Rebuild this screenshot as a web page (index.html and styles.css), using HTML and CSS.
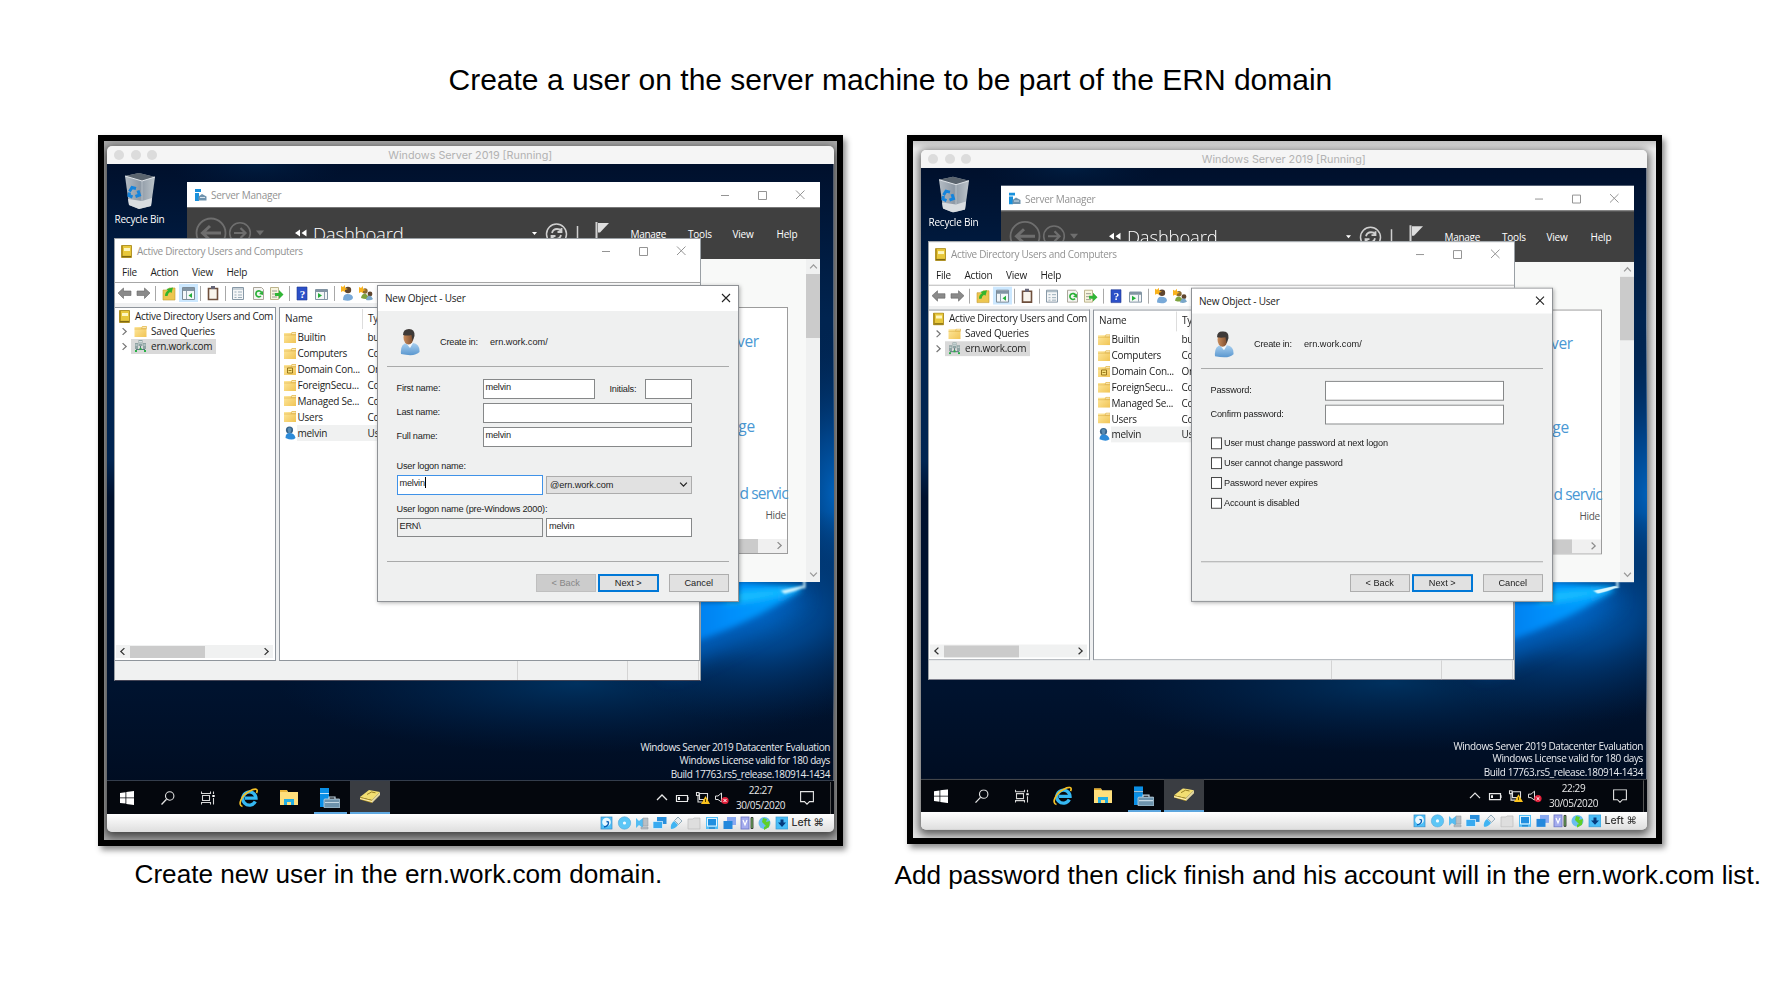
FILE: index.html
```html
<!DOCTYPE html>
<html lang="en">
<head>
<meta charset="utf-8">
<title>Create a user on the server machine</title>
<link rel="stylesheet" href="styles.css">
</head>
<body>
<svg class="defs" width="0" height="0" aria-hidden="true">
  <defs>
    <linearGradient id="gBin" x1="0" x2="1"><stop offset="0" stop-color="#b4bcc4"/><stop offset=".5" stop-color="#8e99a5"/><stop offset="1" stop-color="#bcc4ca"/></linearGradient>
    <linearGradient id="gShirt" x1="0" y1="0" x2="0" y2="1"><stop offset="0" stop-color="#a9d0f0"/><stop offset="1" stop-color="#5a97cf"/></linearGradient>
    <linearGradient id="gFace" x1="0" x2="1"><stop offset="0" stop-color="#c98c5c"/><stop offset="1" stop-color="#7a4a2c"/></linearGradient>
    <linearGradient id="gFolder" x1="0" y1="0" x2="1" y2="1"><stop offset="0" stop-color="#ffe9a0"/><stop offset="1" stop-color="#f0c455"/></linearGradient>
    <linearGradient id="gWall" x1="0" y1="0" x2="0" y2="1"><stop offset="0" stop-color="#00102c"/><stop offset=".25" stop-color="#002450"/><stop offset=".48" stop-color="#002552"/><stop offset=".54" stop-color="#00112e"/><stop offset=".85" stop-color="#00132f"/><stop offset="1" stop-color="#000d22"/></linearGradient>
    <radialGradient id="gGlow"><stop offset="0" stop-color="#0062bc"/><stop offset=".35" stop-color="#00468e" stop-opacity=".9"/><stop offset="1" stop-color="#00234e" stop-opacity="0"/></radialGradient>
    <radialGradient id="gFlow"><stop offset="0" stop-color="#00315f"/><stop offset="1" stop-color="#002048" stop-opacity="0"/></radialGradient>
    <linearGradient id="gBeam" x1="1" x2="0"><stop offset="0" stop-color="#0aa8ff"/><stop offset=".5" stop-color="#0090fc"/><stop offset="1" stop-color="#0074e4"/></linearGradient>
    <filter id="soft" x="-30%" y="-30%" width="160%" height="160%"><feGaussianBlur stdDeviation="3"/></filter>
    <filter id="softer" x="-30%" y="-50%" width="160%" height="200%"><feGaussianBlur stdDeviation="10"/></filter>
    <filter id="soft1"><feGaussianBlur stdDeviation=".8"/></filter>
  </defs>
  <symbol id="i-bin" viewBox="0 0 32 37"><path d="M1 4 15 1l16 4-4 29-12 3-10-4z" fill="url(#gBin)"/><path d="M1 4 15 1l16 4-13 4z" fill="#5a646e"/><path d="M1 4l17 5 13-4" fill="none" stroke="#e0e5ea" stroke-width="1"/><path d="M4 27l14 2 10-3-1 8-12 3-10-4z" fill="#d9dde0"/><path d="M18 9v20" stroke="#cfd5da" stroke-width=".6"/><path d="M5.500 19.500 8 15.500l4 1M14 18.500l1.500 4.500-4 1.500M8.500 25 5 23.500l.5-3" fill="none" stroke="#1584dc" stroke-width="3"/></symbol>
  <symbol id="i-server" viewBox="0 0 12 12"><path d="M0 0h6v3H0z M0 4h4v8H0z" fill="#1790dc"/><path d="M3.500 7.500 7 5l4.500 2.500v4h-8z" fill="#6f93ad"/><path d="M5 8.500h5" stroke="#d7e4ee" stroke-width="1"/></symbol>
  <symbol id="i-book" viewBox="0 0 11 13"><path d="M.5.5h10v12H.5z" fill="#e8c83c" stroke="#b3952a"/><path d="M3 3h6v3H3z" fill="#fdf6c0"/><path d="M1 11.500h9" stroke="#7e6812" stroke-width="1.200"/><path d="M1.500 1v10" stroke="#b8961c"/></symbol>
  <symbol id="i-folder" viewBox="0 0 12 11"><path d="M0 1h7l1-1h4v11H0z" fill="url(#gFolder)"/><path d="M0 3h12M8 .5h4v2H7z" fill="#fbe9b4" stroke="#d9ab3f" stroke-width=".5"/></symbol>
  <symbol id="i-ou" viewBox="0 0 12 11"><use href="#i-folder" width="12" height="11"/><path d="M3.500 4h5v5h-5z M4.500 6.500h3" fill="#f9e27c" stroke="#8e6d10" stroke-width=".9"/></symbol>
  <symbol id="i-domain" viewBox="0 0 13 12"><path d="M4.500 0h4v6h-4zM1 3h3v6H1zM9 3h3v6H9z" fill="#8fa3a3"/><path d="M5 1.500h3M5 3h3M1.500 5h2M9.500 5h2" stroke="#e8f0f0" stroke-width=".8"/><path d="M6.500 6v3M2 9.500h9" stroke="#57767a"/><path d="M5.500 8h2v2h-2zM1 10h2v2H1zM10 10h2v2h-2z" fill="#28b045"/></symbol>
  <symbol id="i-usersm" viewBox="0 0 11 14"><circle cx="5" cy="4" r="3.600" fill="#36648c"/><path d="M3 3q2-3 4 0l-1 4H4z" fill="#5b8db3"/><path d="M1 12q0-5 4-5 5 0 6 5-3 3-10 0z" fill="#2c8ad8"/></symbol>
  <symbol id="i-user" viewBox="0 0 20 27"><path d="M1 25q-1-10 6-11h6q7 1 6.500 9Q15 28 1 25z" fill="url(#gShirt)"/><path d="M6 14l4 5 3-5z" fill="#f4f8fb"/><ellipse cx="8.500" cy="8.500" rx="5" ry="7" fill="url(#gFace)"/><path d="M3 6Q3 0 9 0q6 0 5.500 7l-2 5-1-6Q7 7 3 6z" fill="#3e3a38"/></symbol>
  <symbol id="i-toolbar" viewBox="0 0 262 20">
    <g fill="#8a8a8a" stroke="#666" stroke-width=".6"><path d="M0 10l5.500-5v3H13v4.500H5.500v3zM32 10l-5.500-5v3H19v4.500h7.500v3z"/></g>
    <path d="M37.500 3v15M82.500 3v15M107.500 3v15M171.500 3v15M216.500 3v15" stroke="#a8a8a8"/>
    <path d="M45 7h5l1-2h6v12H45z" fill="#edc650" stroke="#c49a2c" stroke-width=".6"/><path d="M47 13q0-4 3-5.500L48.500 6 55 4.500 53.500 10 52 9q-2 1-2.500 4z" fill="#35b52c"/>
    <path d="M61 1h19v18H61z" fill="#cce8ff"/><path d="M64.500 4.500h12v12h-12z" fill="#f4f7f9" stroke="#7c8b97"/><path d="M65 5h11v3H65z" fill="#8294a3"/><path d="M68.500 8v8" stroke="#8fa0ae"/><path d="M74 10v5l-3.500-2.500z" fill="#22ae39"/>
    <path d="M90.500 5.500h9v11h-9z" fill="#f8f4ec" stroke="#6e4f3c" stroke-width="1.600"/><path d="M93 3h4v3h-4z" fill="#667"/>
    <path d="M114.500 4.500h11v12h-11z" fill="#f5f6f7" stroke="#8798a6"/><path d="M115 6h10M116.500 9h2M116.500 12h2M116.500 14.500h2M120 9h4M120 12h4M120 14.500h4" stroke="#9badb9"/>
    <path d="M135.500 4.500h8l2 2v10h-10z" fill="#f5f5f2" stroke="#aaa59a"/><path d="M143 13a3 3 0 1 1 .6-3.500" fill="none" stroke="#2bb038" stroke-width="1.700"/><path d="M145 8v4l-4-1z" fill="#2bb038"/>
    <path d="M152.500 4.500h8v12h-8z" fill="#f8f5df" stroke="#bcb48c"/><path d="M154 8h5M154 11h5M154 14h5" stroke="#9a9a90"/><path d="M157 10h4V7l4.500 4.500L161 16v-3h-4z" fill="#31b536"/>
    <path d="M179 4h10v13h-10z" fill="#2c50c8" stroke="#1c3590" stroke-width=".6"/>
    <path d="M197.500 6.500h12v10h-12z" fill="#f4f6f7" stroke="#8294a3"/><path d="M198 6h11v3H198z" fill="#8294a3"/><path d="M206.500 9v7" stroke="#8fa0ae"/><path d="M200 10v5l4-2.500z" fill="#22ae39"/>
    <circle cx="230" cy="7" r="3.200" fill="#5f452e"/><path d="M225 17q0-6 4-6 6 0 6 4-2 4-10 2z" fill="#78a9d8"/><path d="M223 3l2 1 2-2 0 3 3 1-3 1 0 2-2-1-2 1z" fill="#f9b31d"/>
    <circle cx="247" cy="8" r="2.700" fill="#8a6a33"/><path d="M243 15q1-5 5-4l4 4q-4 2-9 0z" fill="#7ea33e"/><circle cx="252" cy="11" r="2.400" fill="#5f452e"/><path d="M248 17q1-5 5-4l2 3q-2 2-7 1z" fill="#79a6c8"/><path d="M241 4l2 1 2-2v3l3 1-3 1v2l-2-1-2 1z" fill="#f9b31d"/>
  </symbol>
  <symbol id="i-nav" viewBox="0 0 125 51"><g fill="none" stroke="#6e6e6e"><circle cx="24" cy="25" r="14.500" stroke-width="1.800"/><circle cx="53" cy="25" r="10.300" stroke-width="1.600"/><path d="M34 25H16M23 18l-7.500 7 7.500 7" stroke-width="3"/><path d="M47 25h11M53.500 20l5 5-5 5" stroke-width="2.200"/></g><path d="M69 22.500h8l-4 5z" fill="#6e6e6e"/><path d="M113 21.500v7l-5-3.500zM119.500 21.500v7l-5-3.500z" fill="#fff"/></symbol>
  <symbol id="i-tools" viewBox="0 0 84 51"><path d="M2 24h5l-2.500 3z" fill="#fff"/><g fill="none" stroke="#cfcfcf" stroke-width="1.500"><circle cx="26.500" cy="26" r="10"/><path d="M22 25q1-4 5-4 3 0 4 2M31.500 20v4h-4M31 27q-1 4-5 4-3 0-4-2M21.500 32v-4h4" stroke-width="1.800"/><path d="M47.500 18v17"/><path d="M66.500 14v30" stroke-width="2"/></g><path d="M68 15h11l-9 9.500h-2z" fill="#dedede"/></symbol>
  <symbol id="i-wctl" viewBox="0 0 85 12"><path d="M0 6.500h8M37.500 2.500h8v8h-8zM75 1.500l8.500 8.500M83.500 1.500 75 10" fill="none" stroke="#949494" stroke-width="1"/></symbol>
  <symbol id="i-x" viewBox="0 0 10 10"><path d="M1 1l8 8M9 1 1 9" stroke="#222" stroke-width="1.100"/></symbol>
  <symbol id="i-chev" viewBox="0 0 8 8"><path d="M1 2.300 4 5.500l3-3.200" fill="none" stroke="currentColor" stroke-width="1.100"/></symbol>
  <symbol id="i-win" viewBox="0 0 14 14"><path d="M0 2l5.500-.8v5.300H0zM6.300 1 14 0v6.500H6.300zM0 7.300h5.500v5.300L0 12zM6.300 7.300H14V14l-7.700-1z" fill="#fff"/></symbol>
  <symbol id="i-search" viewBox="0 0 14 14"><circle cx="8.700" cy="5" r="4.200" fill="none" stroke="#e4e4e4" stroke-width="1.100"/><path d="M5.500 8.300.5 13.500" stroke="#e4e4e4" stroke-width="1.300"/></symbol>
  <symbol id="i-task" viewBox="0 0 14 14"><path d="M.5.500v2h9v-2M.5 13.500v-2h9v2M1.500 4.500h7v5h-7zM12.500.5v2.500M12.500 7v6.500" fill="none" stroke="#d6d6d6" stroke-width="1.100"/><path d="M11.300 4h2.400v2h-2.400z" fill="#fff"/></symbol>
  <symbol id="i-ie" viewBox="0 0 20 20"><path d="M16.300 13.500a6.600 6.600 0 1 1 .7-3.300H6" fill="none" stroke="#35b8f2" stroke-width="3.300"/><path d="M3.500 18.500C-2 17 3 7 10 3.500 17-.5 19.500 1 17.500 5" fill="none" stroke="#f3bf26" stroke-width="1.700"/></symbol>
  <symbol id="i-exp" viewBox="0 0 18 16"><path d="M0 0h7l1 2h10v13H0z" fill="#ffdf7c"/><path d="M0 1h7" stroke="#e5aa28" stroke-width="1.500"/><path d="M4 15V9h10v6h-3v-3H7v3z" fill="#22aee4"/></symbol>
  <symbol id="i-sm" viewBox="0 0 20 20"><path d="M0 0h9v5H0zM0 6h9v13H0z" fill="#0a8fe6"/><path d="M0 5.500h9" stroke="#bfe4fb"/><rect x="4" y="11" width="16" height="9" rx="1" fill="#6d93ad" stroke="#c4d8e4" stroke-width=".8"/><path d="M9 11V9h6v2M5 14.500h14" fill="none" stroke="#c4d8e4" stroke-width="1.200"/></symbol>
  <symbol id="i-gold" viewBox="0 0 20 13"><path d="M0 7 9 0l11 2-8 8z" fill="#f2de72"/><path d="M0 7l12 3v3L0 9.500z" fill="#b99a2a"/><path d="M12 10l8-8v3l-8 8z" fill="#e3d7a0"/><path d="M7 4.500 11.500 2l4 .8" fill="none" stroke="#8d741c" stroke-width=".9"/><path d="M0 8.500l12 3" stroke="#fff3b8" stroke-width="1.200"/></symbol>
  <symbol id="i-tray" viewBox="0 0 76 16"><path d="M1 10l5-5 5 5" fill="none" stroke="#e8e8e8" stroke-width="1.300"/><path d="M20.500 5.500h11v6h-11zM32 7v3" fill="none" stroke="#e8e8e8" stroke-width="1.200"/><path d="M22 7h2v3h-2z" fill="#eee"/><path d="M43.500 3.500h8v6h-8zM40.500 2.500h2.500v3h-2.500zM42 6v6h4" fill="none" stroke="#ddd" stroke-width="1.100"/><path d="M49.500 6l4.500 8h-9z" fill="#fbc31c"/><path d="M49.500 9v3" stroke="#5a4200" stroke-width="1"/><path d="M59.500 6H62l3.500-3v9L62 9.500h-2.500z" fill="none" stroke="#ddd" stroke-width="1"/><circle cx="69" cy="10.500" r="3.600" fill="#e2203a"/><path d="M67.500 9l3 3M70.500 9l-3 3" stroke="#fff" stroke-width="1"/></symbol>
  <symbol id="i-note" viewBox="0 0 14 14"><path d="M.6.6h12.800v10H9.500L7 13.200 4.500 10.600H.6z" fill="none" stroke="#e4e4e4" stroke-width="1.100"/></symbol>
  <symbol id="i-status" viewBox="0 0 188 14">
    <rect x="1" y="1" width="11" height="12" fill="#4fc0f8" stroke="#3a8ec8" stroke-width=".7"/><circle cx="6.500" cy="6" r="4.300" fill="#eaf8ff"/><path d="M4 11q5-1 4.500-5L6.500 5.500" fill="none" stroke="#0a5fb4" stroke-width="1.300"/>
    <circle cx="24.500" cy="7" r="6.200" fill="#5cc6f6" stroke="#54a8d8" stroke-width=".6"/><circle cx="24.500" cy="7" r="1.600" fill="#f4fbff"/>
    <path d="M36 2l3 3 4-3v10l-4-3-3 3z" fill="#55bdf2"/><path d="M43 2h5v8h-5zM41 11h7v2h-7z" fill="#b9bfc4" stroke="#8e979e" stroke-width=".5"/>
    <rect x="57" y="1" width="9.500" height="7" fill="#2a8fdc"/><rect x="53" y="5.500" width="9.500" height="7" fill="#38aaf0" stroke="#e6f5ff" stroke-width=".7"/>
    <path d="M71 13q-1-5 3-8l4 4q-3 4-7 4z" fill="#41b4f2"/><path d="M74.500 4.500 78 1l4 4-3.500 3.500z" fill="#e8ecef" stroke="#7999ac" stroke-width=".8"/>
    <path d="M88 3h5l1-1h6v11H88z" fill="#dedede" stroke="#bcbcbc" stroke-width=".7"/>
    <rect x="106" y="1" width="12" height="12" fill="#52bff8"/><rect x="107.500" y="2.500" width="9" height="7.500" fill="#1f8fe0" stroke="#e5f6ff"/><path d="M109 12h6" stroke="#0f6cb8"/>
    <rect x="127" y="1" width="9" height="8" fill="#8aa9f0"/><rect x="123.500" y="5" width="9" height="8" fill="#2488dc"/>
    <rect x="141" y="1" width="8" height="12" fill="#a4acee" stroke="#6a74c6" stroke-width=".8"/><path d="M143 4l2 5 2-5" fill="none" stroke="#fff" stroke-width="1.200"/><path d="M151 1.500h2v11h-2z" fill="#7ac068" stroke="#222" stroke-width=".8"/>
    <circle cx="164.500" cy="7" r="6" fill="#69bdf0"/><path d="M163 2l4 1-1 3 4-1-1 6-5 3v-3l2-1-4-4z" fill="#5fcf28"/>
    <rect x="176" y="1" width="12" height="12" fill="#48bdf8" stroke="#3b9bd4" stroke-width=".7"/><path d="M180.500 3.500h3v3h2.500L182 11l-4-4.500h2.500z" fill="#063a7c"/>
  </symbol>
</svg>

<h1 class="headline">Create a user on the server machine to be part of the ERN domain</h1>

<main class="shots">
  <figure class="shot shot--create">
    <div class="frame"><div class="vm" data-form="form-create" data-time="22:27"></div></div>
    <figcaption class="caption">Create new user in the ern.work.com domain.</figcaption>
  </figure>
  <figure class="shot shot--password">
    <div class="frame"><div class="vm vm--short" data-form="form-password" data-time="22:29"></div></div>
    <figcaption class="caption">Add password then click finish and his account will in the ern.work.com list.</figcaption>
  </figure>
</main>

<template id="vm">
  <header class="mac-title"><span class="lights"><i></i><i></i><i></i></span><span class="mac-name">Windows Server 2019 [Running]</span></header>
  <div class="desktop">
    <svg class="wallpaper" viewBox="0 0 727 617" preserveAspectRatio="none">
      <rect width="727" height="617" fill="url(#gWall)"/>
      <ellipse cx="150" cy="0" rx="90" ry="25" fill="url(#gFlow)" opacity=".4"/>
      <ellipse cx="470" cy="520" rx="300" ry="70" fill="url(#gFlow)"/>
      <ellipse cx="730" cy="330" rx="90" ry="170" fill="url(#gGlow)"/>
      <ellipse cx="650" cy="450" rx="190" ry="110" fill="url(#gGlow)"/>
      <path d="M697 430 560 418v92q60-24 137-72z" fill="#0064c4" opacity=".8" filter="url(#softer)"/>
      <path d="M695 424 560 410v76q75-20 135-60z" fill="url(#gBeam)" filter="url(#soft)"/>
      <path d="M695 424l-60 3-20 14q50-3 80-17z" fill="#12bcff" filter="url(#soft)"/>
      <path d="M696 422l-22 5 4 3q10-2 19-6zM696 400l1 25 2-1-1-25z" fill="#d6f6ff" filter="url(#soft1)"/>
    </svg>
    <div class="bin"><svg width="32" height="37"><use href="#i-bin"/></svg><span>Recycle Bin</span></div>

    <section class="win manager">
      <div class="win-title"><svg width="12" height="12"><use href="#i-server"/></svg><span>Server Manager</span><svg class="wctl" width="85" height="12"><use href="#i-wctl"/></svg></div>
      <nav class="manager-bar">
        <svg width="125" height="51"><use href="#i-nav"/></svg><span class="dash">Dashboard</span>
        <svg class="bar-tools" width="84" height="51"><use href="#i-tools"/></svg>
        <span class="m1">Manage</span><span class="m2">Tools</span><span class="m3">View</span><span class="m4">Help</span>
      </nav>
      <div class="manager-body">
        <div class="card">
          <p class="link l1">ver</p><p class="link l2">age</p><p class="link l3">d servic</p><p class="hide">Hide</p>
          <div class="card-scroll"><i></i><svg class="rt" width="9" height="9"><use href="#i-chev"/></svg></div>
        </div>
        <div class="vscroll"><svg class="up" width="9" height="9"><use href="#i-chev"/></svg><i></i><svg width="9" height="9"><use href="#i-chev"/></svg></div>
      </div>
    </section>

    <section class="win ad">
      <div class="win-title"><svg width="11" height="13"><use href="#i-book"/></svg><span>Active Directory Users and Computers</span><svg class="wctl" width="85" height="12"><use href="#i-wctl"/></svg></div>
      <div class="menu"><span>File</span><span>Action</span><span>View</span><span>Help</span></div>
      <div class="toolbar"><svg width="262" height="20"><use href="#i-toolbar"/><text x="184.300" y="14.500" class="qmark">?</text></svg></div>
      <div class="panes">
        <div class="tree">
          <div class="root"><svg width="11" height="13"><use href="#i-book"/></svg><span>Active Directory Users and Com</span></div>
          <div class="node"><svg class="rt" width="9" height="9"><use href="#i-chev"/></svg><span class="pick"><svg width="12" height="11"><use href="#i-folder"/></svg>Saved Queries</span></div>
          <div class="node"><svg class="rt" width="9" height="9"><use href="#i-chev"/></svg><span class="pick pick--on"><svg width="13" height="12"><use href="#i-domain"/></svg>ern.work.com</span></div>
          <div class="tree-scroll"><svg class="lt" width="9" height="9"><use href="#i-chev"/></svg><i></i><svg class="rt" width="9" height="9"><use href="#i-chev"/></svg></div>
        </div>
        <div class="list">
          <div class="list-head"><span class="c1">Name</span><span>Ty</span></div>
          <div class="item"><svg width="12" height="11"><use href="#i-folder"/></svg><b>Builtin</b><span>bu</span></div>
          <div class="item"><svg width="12" height="11"><use href="#i-folder"/></svg><b>Computers</b><span>Co</span></div>
          <div class="item"><svg width="12" height="11"><use href="#i-ou"/></svg><b>Domain Con...</b><span>Or</span></div>
          <div class="item"><svg width="12" height="11"><use href="#i-folder"/></svg><b>ForeignSecu...</b><span>Co</span></div>
          <div class="item"><svg width="12" height="11"><use href="#i-folder"/></svg><b>Managed Se...</b><span>Co</span></div>
          <div class="item"><svg width="12" height="11"><use href="#i-folder"/></svg><b>Users</b><span>Co</span></div>
          <div class="item item--on"><svg width="12" height="14"><use href="#i-usersm"/></svg><b>melvin</b><span>Us</span></div>
        </div>
      </div>
      <div class="ad-status"><i></i><i></i><i></i></div>
    </section>

    <section class="win dialog">
      <div class="dlg-title"><span>New Object - User</span><svg width="10" height="10"><use href="#i-x"/></svg></div>
      <div class="dlg-head"><svg width="20" height="27"><use href="#i-user"/></svg><span class="in">Create in:</span><span class="path">ern.work.com/</span></div>
      <div class="form"></div>
      <div class="dlg-foot"><span class="btn btn--back">&lt; Back</span><span class="btn btn--next">Next &gt;</span><span class="btn btn--cancel">Cancel</span></div>
    </section>

    <div class="watermark"><p>Windows Server 2019 Datacenter Evaluation</p><p>Windows License valid for 180 days</p><p>Build 17763.rs5_release.180914-1434</p></div>
  </div>
  <footer class="taskbar">
    <span class="t"><svg width="14" height="14"><use href="#i-win"/></svg></span>
    <span class="t"><svg width="14" height="14"><use href="#i-search"/></svg></span>
    <span class="t"><svg width="14" height="14"><use href="#i-task"/></svg></span>
    <span class="t"><svg width="20" height="20"><use href="#i-ie"/></svg></span>
    <span class="t"><svg width="18" height="16"><use href="#i-exp"/></svg></span>
    <span class="t t--open"><svg width="20" height="20"><use href="#i-sm"/></svg></span>
    <span class="t t--active"><svg width="20" height="13"><use href="#i-gold"/></svg></span>
    <svg class="tray" width="76" height="16"><use href="#i-tray"/></svg>
    <span class="clock"><span class="time"></span><span>30/05/2020</span></span>
    <svg class="note" width="14" height="14"><use href="#i-note"/></svg>
    <i class="peek"></i>
  </footer>
  <div class="statusbar"><svg width="188" height="14"><use href="#i-status"/></svg><span>Left ⌘</span></div>
</template>

<template id="form-create">
  <div class="row"><label>First name:</label><span class="field f-first">melvin</span><label class="ini">Initials:</label><span class="field f-ini"></span></div>
  <div class="row"><label>Last name:</label><span class="field f-wide"></span></div>
  <div class="row"><label>Full name:</label><span class="field f-wide">melvin</span></div>
  <div class="lbl lbl--logon">User logon name:</div>
  <div class="pair"><span class="field field--focus">melvin<i class="caret"></i></span><span class="select">@ern.work.com<svg width="9" height="9"><use href="#i-chev"/></svg></span></div>
  <div class="lbl lbl--pre">User logon name (pre-Windows 2000):</div>
  <div class="pair"><span class="field field--off">ERN\</span><span class="field">melvin</span></div>
</template>

<template id="form-password">
  <div class="row row--pw"><label>Password:</label><span class="field f-pw"></span></div>
  <div class="row row--pw"><label>Confirm password:</label><span class="field f-pw"></span></div>
  <div class="checks">
    <span class="check"><i></i>User must change password at next logon</span>
    <span class="check"><i></i>User cannot change password</span>
    <span class="check"><i></i>Password never expires</span>
    <span class="check"><i></i>Account is disabled</span>
  </div>
</template>
<script src="app.js"></script>
</body>
</html>
```
FILE: styles.css
```css
* { box-sizing: border-box; }
body { margin: 0; width: 1787px; height: 985px; overflow: hidden; background: #fff; color: #000; font-family: "Liberation Sans", Arial, sans-serif; }
p, figure { margin: 0; }
i { font-style: normal; display: block; }
svg { display: block; flex: none; }
.defs { position: absolute; }
.headline { margin: 0; padding: 62px 0 0 448.500px; height: 135px; font-size: 30px; line-height: 36px; font-weight: 400; white-space: nowrap; }
.shots { display: flex; gap: 64px; padding-left: 98px; align-items: flex-start; }
.frame { border: 6px solid #000; box-shadow: 3px 4px 6px rgba(0,0,0,.45); background: #d9d9d9; overflow: hidden; }
.shot--create { width: 745px; }
.shot--create .frame { height: 711px; padding: 5px 0 0 3px; background: #a8a8a8; }
.shot--password { width: 755px; }
.shot--password .frame { height: 709px; padding: 9px 0 0 8px; background: linear-gradient(#c4c4c4, #eee 8px, #e4e4e4); }
.caption { font-size: 26.170px; line-height: 32px; white-space: nowrap; }
.shot--create .caption { margin: 12px 0 0 36.500px; }
.shot--password .caption { margin: 15px 0 0 -12.500px; }
.qmark { font: bold 11px "Liberation Serif", serif; fill: #fff; text-anchor: middle; }

.vm { width: 726.500px; height: 686px; border-radius: 5px; overflow: hidden; box-shadow: 0 3px 9px 2px rgba(0,0,0,.6); font: 10px/14px "Open Sans", "Noto Sans", sans-serif; letter-spacing: -.34px; color: #1c1c1c; white-space: nowrap; }
.vm--short { width: 725.500px; transform: scaleY(.991); transform-origin: 0 0; }
.mac-title { position: relative; height: 18.300px; background: #f5f5f5; text-align: center; color: #b2b2b2; font: 10.800px/19px Inter, sans-serif; letter-spacing: 0; }
.lights { position: absolute; left: 7px; top: 4px; display: flex; gap: 6.500px; }
.lights i { width: 10px; height: 10px; border-radius: 50%; background: #dcdcdc; }
.desktop { position: relative; height: 616.700px; overflow: hidden; }
.wallpaper { position: absolute; inset: 0; width: 100%; height: 100%; }
.bin { position: absolute; left: 2.500px; top: 8px; width: 60px; display: flex; flex-direction: column; align-items: center; gap: 3px; color: #fff; letter-spacing: -.2px; }

.win { position: absolute; background: #fff; }
.win-title { display: flex; align-items: center; color: #929292; padding-left: 8px; }
.win-title .wctl { margin-left: auto; }

.manager { left: 80px; top: 17.700px; width: 633px; height: 400px; }
.manager .win-title { height: 25.500px; gap: 4px; padding-right: 14px; letter-spacing: -.25px; }
.manager-bar { height: 51.500px; background: #404040; color: #fff; display: flex; align-items: center; border-top: 1px solid #777; letter-spacing: -.2px; }
.dash { font-size: 18.500px; font-weight: 300; line-height: 24px; width: 92px; margin-left: 1px; letter-spacing: -.2px; }
.bar-tools { margin-left: 125px; }
.m1 { width: 57.500px; margin-left: 16.500px; letter-spacing: -.3px; } .m2 { width: 44.500px; } .m3 { width: 44px; }
.manager-body { display: flex; justify-content: flex-end; height: 323px; background: #f8f9f8; }
.card { margin: 48px 18.500px 0 0; width: 80px; height: 247px; border: 1px solid #9c9c9c; background: #fff; display: flex; flex-direction: column; }
.link { color: #4a98d4; font-size: 15.500px; line-height: 24px; letter-spacing: -.3px; }
.l1 { margin-top: 21px; padding-left: 28.500px; }
.l2 { margin-top: 61px; padding-left: 21.500px; }
.l3 { margin-top: 43px; padding-left: 31px; letter-spacing: -.85px; width: 78px; }
.hide { margin-top: 3px; padding-left: 57px; color: #555; }
.card-scroll { margin-top: auto; height: 14px; background: #f0f0f0; display: flex; align-items: center; justify-content: space-between; padding-right: 3px; color: #8a8a8a; }
.card-scroll i { width: 49px; height: 14px; background: #cbcbcb; }
.vscroll { width: 14px; background: #f0f1f1; display: flex; flex-direction: column; align-items: center; padding: 3px 0; color: #999; }
.vscroll i { width: 14px; height: 64px; background: #cbcbcb; margin-top: 3px; }
.vscroll svg:last-child { margin-top: auto; }
.up { transform: rotate(180deg); } .rt { transform: rotate(-90deg); } .lt { transform: rotate(90deg); }

.ad { left: 6.500px; top: 73.700px; width: 587px; height: 443px; border: 1px solid #9aa0a5; border-bottom-color: #445; display: flex; flex-direction: column; }
.ad .win-title { height: 25px; gap: 5px; padding: 0 12.500px 0 6.500px; letter-spacing: -.32px; }
.menu { height: 19px; line-height: 13px; display: flex; gap: 13.500px; padding: 2px 0 0 7.500px; border-bottom: 1px solid #a7a7a7; letter-spacing: -.22px; }
.toolbar { height: 24.500px; padding-left: 3.500px; background: linear-gradient(#fff 20px, #eff0f1 20px); }
.panes { flex: 1; display: flex; gap: 3px; background: #eff0f1; }
.tree, .list { background: #fff; border: 1px solid #8f959c; min-width: 0; display: flex; flex-direction: column; }
.tree { width: 161.500px; border-left: 0; padding-top: 1px; }
.root { display: flex; align-items: center; gap: 5px; height: 14px; padding-left: 4.500px; letter-spacing: -.3px; }
.node { display: flex; align-items: center; height: 15.300px; padding-left: 5px; color: #777; }
.node .pick { display: flex; align-items: center; gap: 4px; padding: 0 4px 0 3px; margin-left: 2.500px; height: 15px; color: #1c1c1c; letter-spacing: -.24px; }
.pick svg { width: 13px; }
.pick--on { background: #d9d9d9; }
.tree-scroll { margin: auto 2px 2px 1px; height: 13px; background: #f0f1f1; display: flex; align-items: center; color: #333; padding: 0 2px; }
.tree-scroll i { width: 75px; height: 12px; background: #cbcbcb; margin: 0 auto 0 3px; }
.list { flex: 1; }
.list-head { display: flex; height: 21px; padding: 3px 0 0 5px; }
.list-head .c1 { width: 78px; margin-right: 5px; border-right: 1px solid #ddd; margin-top: -2px; padding-top: 2px; letter-spacing: -.1px; }
.item { display: flex; align-items: center; height: 15.900px; padding-left: 3.500px; }
.item b { font-weight: 400; width: 70px; margin-left: 2px; letter-spacing: -.25px; }
.item--on { background: linear-gradient(90deg, transparent 17px, #f0f1f1 17px); }
.ad-status { height: 18.500px; background: #f0f1f1; display: flex; justify-content: flex-end; align-items: stretch; padding-right: 1px; }
.ad-status i { border-left: 1px solid #d4d4d4; width: 71px; }
.ad-status i:first-child { width: 110px; } .ad-status i:last-child { width: 1px; }

.dialog { left: 270px; top: 121px; width: 362px; height: 316.500px; border: 1px solid #8f9296; border-width: 1px 1.500px 1.500px 1px; background: #eff0f0; box-shadow: 1px 1px 4px rgba(0,0,0,.3); font: 9.200px/12px "Liberation Sans", Arial, sans-serif; letter-spacing: -.2px; display: flex; flex-direction: column; }
.dlg-title { height: 25px; background: #fff; display: flex; align-items: center; justify-content: space-between; padding: 0 7.500px 1px 7px; font: 10px/14px "Open Sans", sans-serif; letter-spacing: -.2px; }
.dlg-head { height: 55.500px; margin: 0 9px; border-bottom: 1px solid #a9aaaa; display: flex; align-items: center; padding: 7.500px 0 0 12.500px; }
.dlg-head .in { margin-left: 20.500px; width: 50px; }
.path { letter-spacing: 0; }
.form { padding: 10px 0 0 18.500px; }
.row { display: flex; align-items: center; height: 24px; }
.row label { width: 86px; padding-bottom: 2px; }
.row .ini { width: 35px; margin-left: 15px; padding: 0; }
.field { height: 19.500px; border: 1px solid #868889; background: #fff; padding: 1px 0 0 2px; letter-spacing: -.2px; }
.f-first { width: 112px; } .f-ini { width: 47.500px; } .f-wide { width: 209.500px; }
.lbl { height: 14px; }
.lbl--logon { margin-top: 11px; }
.lbl--pre { margin-top: 8px; }
.pair { display: grid; grid-template-columns: 146.500px 146px; gap: 3px; margin-top: 1px; align-items: center; }
.field--focus { border-color: #3f92e8; display: flex; height: 20px; }
.caret { width: 1px; height: 11px; background: #000; }
.field--off { background: #eff0f0; }
.select { height: 18px; background: #e1e1e1; border: 1px solid #acacac; display: flex; justify-content: space-between; align-items: center; padding: 0 3px; letter-spacing: -.08px; color: #222; }
.row--pw label { width: 114px; } .f-pw { width: 179px; }
.checks { display: grid; gap: 9.200px; padding-top: 11.500px; }
.check { display: flex; align-items: center; gap: 2px; height: 11px; }
.check i { width: 11.500px; height: 11.500px; border: 1px solid #444; background: #fff; }
.dlg-foot { margin: auto 9px 8.500px; height: 31.500px; border-top: 1px solid #a9aaaa; display: flex; justify-content: flex-end; align-items: flex-end; }
.btn { height: 18px; width: 60.500px; border: 1px solid #adadad; background: #e1e1e1; text-align: center; line-height: 16px; letter-spacing: 0; }
.btn--next { border: 2px solid #0078d7; line-height: 14px; margin: 0 10px 0 2px; }
.shot--create .btn--back { background: #cccccc; border-color: #bfbfbf; color: #868686; }

.watermark { position: absolute; right: 3.500px; top: 575.500px; color: #e8ebef; text-align: right; letter-spacing: -.4px; }
.watermark p { height: 13.700px; }
.taskbar { height: 33.500px; background: #04070d; display: flex; align-items: center; color: #e8e8e8; }
.t { width: 40.500px; height: 33.500px; display: flex; align-items: center; justify-content: center; }
.t--open { background: linear-gradient(#5fa8e0, #5fa8e0) 4px 100% / 33px 2px no-repeat; }
.t--active { width: 40px; background: linear-gradient(#5fa8e0, #5fa8e0) 0 100% / 100% 2px no-repeat #3a3d42; padding-bottom: 3px; }
.tray { margin-left: auto; }
.clock { width: 50px; margin: 0 14px 0 4px; text-align: center; display: flex; flex-direction: column; line-height: 15px; letter-spacing: -.4px; }
.peek { width: 1px; height: 32px; background: #555; margin: 0 3px 0 16px; }
.statusbar { height: 17.500px; background: linear-gradient(#fff, #dedede); display: flex; align-items: center; justify-content: flex-end; gap: 4px; padding: 0 9.500px 0 0; font: 500 10.500px/14px Inter, "DejaVu Sans", sans-serif; letter-spacing: 0; color: #333; }
```
FILE: app.js
```js
// Fill each virtual machine window from the shared desktop and its own wizard page.
document.querySelectorAll('.vm').forEach(function (vm) {
  vm.appendChild(document.getElementById('vm').content.cloneNode(true));
  vm.querySelector('.form').appendChild(document.getElementById(vm.dataset.form).content.cloneNode(true));
  vm.querySelector('.time').textContent = vm.dataset.time;
});
```
